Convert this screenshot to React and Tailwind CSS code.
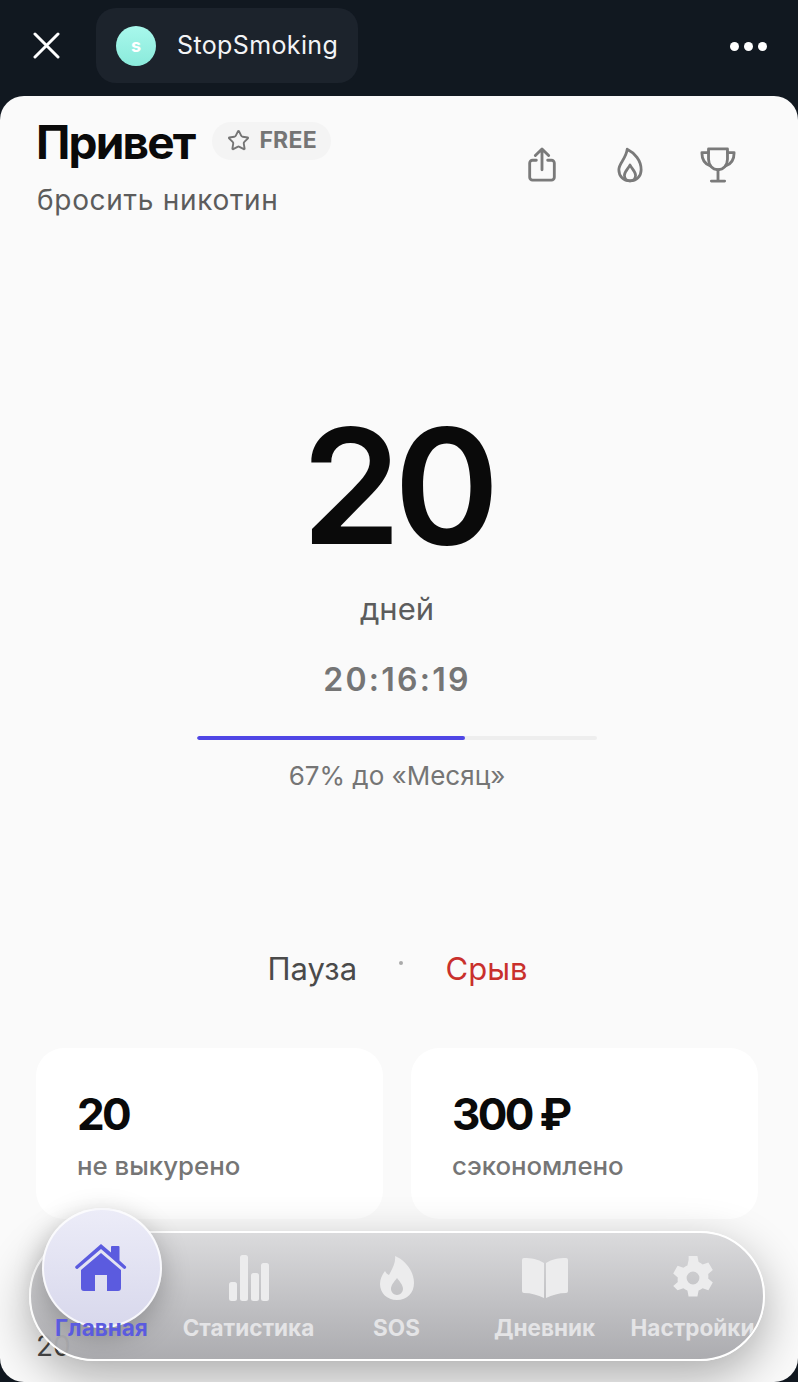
import { Star } from "lucide-react";

const INTER = "font-['Inter',sans-serif]";

const ShareIcon = () => (
  <svg width="30" height="36" viewBox="0 0 30 38" fill="none" stroke="#7a7a7a" strokeWidth="3" strokeLinecap="round" strokeLinejoin="round">
    <path d="M15 24V3M8 9l7-7 7 7" />
    <path d="M9 14H5a3 3 0 0 0-3 3v15a3 3 0 0 0 3 3h20a3 3 0 0 0 3-3V17a3 3 0 0 0-3-3h-4" />
  </svg>
);

const FlameIcon = () => (
  <svg width="26" height="36" viewBox="0 0 28 38" fill="none" stroke="#7a7a7a" strokeWidth="3" strokeLinecap="round" strokeLinejoin="round">
    <path d="M11 2c8 4 15 12 15 22 0 7-5 12-12 12S2 31 2 24c0-7 8-12 9-22Z" />
    <path d="M14 36c-4 0-6-3-6-6 0-4 4-7 6-11 2 4 6 7 6 11 0 3-2 6-6 6Z" />
  </svg>
);

const TrophyIcon = () => (
  <svg width="36" height="36" viewBox="0 0 38 38" fill="none" stroke="#7a7a7a" strokeWidth="3" strokeLinecap="round" strokeLinejoin="round">
    <path d="M9 2h20v11c0 6-4 11-10 11S9 19 9 13V2Z" />
    <path d="M9 6H2c0 7 3 12 9 14M29 6h7c0 7-3 12-9 14" />
    <path d="M19 24v11M12 36h14" />
  </svg>
);

const HomeIcon = () => (
  <svg width="52" height="48" viewBox="0 0 52 48" fill="#5b5bdf">
    <path d="M26 0 36 8.500V3a1 1 0 0 1 1-1h6.500a1 1 0 0 1 1 1v13.500l6 5.500a1.500 1.500 0 0 1-2 2.500L26 5 3 24.500A1.500 1.500 0 0 1 .8 22L26 0Z" />
    <path d="M26 9 46 26v18a3 3 0 0 1-3 3H32V31H20v16H9a3 3 0 0 1-3-3V26L26 9Z" />
  </svg>
);

const StatsIcon = () => (
  <svg width="40" height="46" viewBox="0 0 40 46" fill="#ececed">
    <rect x="0" y="27" width="8" height="19" rx="2.500" />
    <rect x="11" y="0" width="8" height="46" rx="2.500" />
    <rect x="22" y="18" width="8" height="28" rx="2.500" />
    <rect x="32" y="8" width="8" height="38" rx="2.500" />
  </svg>
);

const SosIcon = () => (
  <svg width="34" height="46" viewBox="0 0 34 44">
    <path fillRule="evenodd" fill="#ececed" d="M15 0c10 4 19 15 19 27 0 10-7 17-17 17S0 37 0 28c0-5 2-9 5-13 1 2 2 3 4 4 3-6 7-12 6-19Zm2 22c-3 4-6 7-6 11 0 3 3 6 6 6s6-3 6-6c0-4-3-7-6-11Z" />
  </svg>
);

const BookIcon = () => (
  <svg width="46" height="40" viewBox="0 0 46 40" fill="#ececed">
    <path d="M2 0c7 0 14 1 20 5v35c-6-3-13-5-20-5a2 2 0 0 1-2-2V2a2 2 0 0 1 2-2Z" />
    <path d="M44 0c-7 0-14 1-20 5v35c6-3 13-5 20-5a2 2 0 0 0 2-2V2a2 2 0 0 0-2-2Z" />
  </svg>
);

const GearIcon = () => (
  <svg width="48" height="48" viewBox="0 0 24 24" fill="#ececed">
    <path fillRule="evenodd" d="M9.800 1h4.400l.6 3a8 8 0 0 1 2 1.200l2.900-1 2.200 3.800-2.300 2a8 8 0 0 1 0 2.300l2.300 2-2.200 3.800-2.900-1a8 8 0 0 1-2 1.200l-.6 3H9.800l-.6-3a8 8 0 0 1-2-1.200l-2.900 1L2.100 16l2.300-2a8 8 0 0 1 0-2.300l-2.300-2 2.200-3.800 2.900 1a8 8 0 0 1 2-1.200l.6-2.700ZM12 8.800a3.200 3.200 0 1 0 0 6.400 3.200 3.200 0 0 0 0-6.400Z" />
  </svg>
);

const NAV = [
  { label: "Статистика", icon: <StatsIcon /> },
  { label: "SOS", icon: <SosIcon /> },
  { label: "Дневник", icon: <BookIcon /> },
  { label: "Настройки", icon: <GearIcon /> },
];

function StatCard({ value, label }) {
  return (
    <div className="flex-1 h-[171px] bg-white rounded-[28px] pt-[40px] pl-[41px]">
      <div className="text-[44px] leading-[52px] font-bold text-[#0a0a0a] tracking-[-0.06em]">{value}</div>
      <div className="mt-[9px] text-[25.800px] leading-[34px] font-medium text-[#757575]">{label}</div>
    </div>
  );
}

export default function App() {
  return (
    <div className={`${INTER} relative w-[798px] h-[1382px] overflow-hidden bg-[#111820]`}>
      {/* Top bar */}
      <header className="h-[96px] flex items-start justify-between pl-[33px] pr-[31px] pt-[8px]">
        <div className="flex items-center gap-[36px]">
          <svg width="27" height="27" viewBox="0 0 27 27" stroke="#fff" strokeWidth="3" strokeLinecap="round">
            <path d="M2 2l23 23M25 2 2 25" />
          </svg>
          <div className="w-[262px] h-[75px] rounded-[20px] bg-[#1c232c] flex items-center pl-[20px] gap-[21px]">
            <div className="w-[40px] h-[40px] rounded-full bg-gradient-to-b from-[#a8f8ec] to-[#8aeadb] flex items-center justify-center text-white text-[18px] font-bold">
              s
            </div>
            <span className="text-[25px] tracking-[0.015em] text-[#f3f4f6]">StopSmoking</span>
          </div>
        </div>
        <div className="flex items-center gap-[5px] h-[76px]">
          <span className="w-[9px] h-[9px] rounded-full bg-white" />
          <span className="w-[9px] h-[9px] rounded-full bg-white" />
          <span className="w-[9px] h-[9px] rounded-full bg-white" />
        </div>
      </header>

      {/* Sheet */}
      <main className="relative h-[1286px] bg-[#fafafa] rounded-[24px] overflow-hidden pl-[36px] pr-[40px]">
        <div className="flex justify-between pt-[17px]">
          <div>
            <div className="flex items-center gap-[18px]">
              <h1 className="text-[46px] leading-[58px] font-bold tracking-[-0.04em] text-[#0a0a0a]">Привет</h1>
              <span className="h-[38px] w-[119px] pl-[15px] rounded-full bg-[#f4f4f4] flex items-center gap-[9px] text-[23px] font-bold text-[#757575] tracking-[0.01em] mb-[3px]">
                <Star size={23} strokeWidth={2} />
                FREE
              </span>
            </div>
            <p className="text-[28px] leading-[36px] tracking-[0.025em] text-[#5c5c5c] mt-[11px] pl-[1px]">бросить никотин</p>
          </div>
          <div className="flex items-start gap-[57px] pt-[34px] pr-[22px]">
            <div className="mr-[3px]">
              <ShareIcon />
            </div>
            <FlameIcon />
            <TrophyIcon />
          </div>
        </div>

        {/* Counter */}
        <div className="flex flex-col items-center mt-[172px]">
          <div className="text-[160px] leading-[192px] font-semibold text-[#0a0a0a] tracking-[-0.045em]">20</div>
          <div className="text-[31px] leading-[40px] text-[#5c5c5c] mt-[7px]">дней</div>
          <div className="text-[32px] leading-[40px] font-semibold text-[#757575] tracking-[0.07em] mt-[31px]">20:16:19</div>
          <div className="w-[400px] h-[4px] rounded-full bg-[#eeeeee] mt-[36px] overflow-hidden">
            <div className="w-[67%] h-full rounded-full bg-[#4f46e5]" />
          </div>
          <div className="text-[26px] leading-[32px] text-[#757575] mt-[20px]">67% до «Месяц»</div>
        </div>

        {/* Actions */}
        <div className="flex items-center justify-center mt-[157px] text-[31px] leading-[40px]">
          <span className="w-[89px] whitespace-nowrap text-[#4a4a4a]">Пауза</span>
          <span className="w-[4px] h-[4px] rounded-full bg-[#aaaaaa] ml-[42px] mr-[43px] mb-[12px]" />
          <span className="w-[81px] whitespace-nowrap text-[#c9302c]">Срыв</span>
        </div>

        {/* Stats */}
        <div className="flex gap-[28px] mt-[59px]">
          <StatCard value="20" label="не выкурено" />
          <StatCard value="300 ₽" label="сэкономлено" />
        </div>

        <div className="mt-[111px] text-[28px] leading-[32px] text-[#4a4a4a]">20</div>
      </main>

      {/* Floating nav */}
      <nav className="absolute left-[29px] top-[1231px] w-[736px] h-[130px] rounded-[65px] border-2 border-white bg-gradient-to-b from-[#d9d9db]/95 to-[#a8a8ac]/95 shadow-[0_16px_48px_rgba(0,0,0,0.32)] overflow-hidden flex items-start pl-[143.500px]">
        {NAV.map((item) => (
          <div key={item.label} className="w-[148px] flex flex-col items-center shrink-0">
            <div className="h-[46px] mt-[22px] flex items-center justify-center">{item.icon}</div>
            <span className="mt-[12px] text-[22.500px] leading-[30px] font-bold text-[#e4e4e6] whitespace-nowrap">{item.label}</span>
          </div>
        ))}
      </nav>

      {/* Active tab */}
      <div className="absolute left-[42px] top-[1208px] w-[120px] h-[120px] rounded-full border-2 border-white/80 bg-gradient-to-b from-[#ececf8] to-[#d8d8ec] shadow-[0_8px_28px_rgba(0,0,0,0.25)] flex items-center justify-center pr-[3px]">
        <HomeIcon />
      </div>
      <span className="absolute left-[55px] top-[1313px] text-[22.500px] leading-[30px] font-bold text-[#5b5bdf]">Главная</span>
    </div>
  );
}
